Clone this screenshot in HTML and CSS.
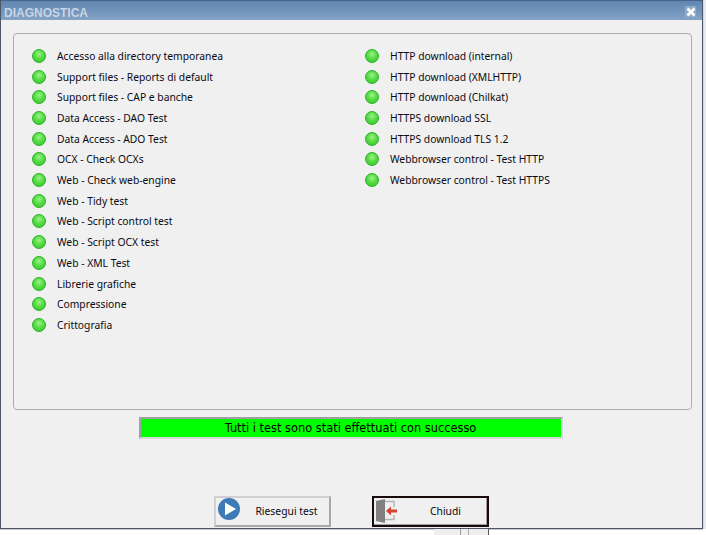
FILE: index.html
```html
<!DOCTYPE html>
<html lang="it">
<head>
<meta charset="utf-8">
<title>Diagnostica</title>
<link rel="stylesheet" href="styles.css">
</head>
<body>
<div class="window">
  <header class="titlebar">
    <span class="title">DIAGNOSTICA</span>
    <span class="close"><svg width="10" height="10" viewBox="0 0 10 10"><path d="M1.5 1.5l7 7M8.5 1.5l-7 7" stroke="#fff" stroke-width="2.6" fill="none"/></svg></span>
  </header>
  <main class="content">
    <section class="panel">
      <ul class="col col-a">
        <li class="row"><i class="led"></i>Accesso alla directory temporanea</li>
        <li class="row"><i class="led"></i>Support files - Reports di default</li>
        <li class="row"><i class="led"></i>Support files - CAP e banche</li>
        <li class="row"><i class="led"></i>Data Access - DAO Test</li>
        <li class="row"><i class="led"></i>Data Access - ADO Test</li>
        <li class="row"><i class="led"></i>OCX - Check OCXs</li>
        <li class="row"><i class="led"></i>Web - Check web-engine</li>
        <li class="row"><i class="led"></i>Web - Tidy test</li>
        <li class="row"><i class="led"></i>Web - Script control test</li>
        <li class="row"><i class="led"></i>Web - Script OCX test</li>
        <li class="row"><i class="led"></i>Web - XML Test</li>
        <li class="row"><i class="led"></i>Librerie grafiche</li>
        <li class="row"><i class="led"></i>Compressione</li>
        <li class="row"><i class="led"></i>Crittografia</li>
      </ul>
      <ul class="col">
        <li class="row"><i class="led"></i>HTTP download (internal)</li>
        <li class="row"><i class="led"></i>HTTP download (XMLHTTP)</li>
        <li class="row"><i class="led"></i>HTTP download (Chilkat)</li>
        <li class="row"><i class="led"></i>HTTPS download SSL</li>
        <li class="row"><i class="led"></i>HTTPS download TLS 1.2</li>
        <li class="row"><i class="led"></i>Webbrowser control - Test HTTP</li>
        <li class="row"><i class="led"></i>Webbrowser control - Test HTTPS</li>
      </ul>
    </section>
    <div class="status">Tutti i test sono stati effettuati con successo</div>
    <footer class="actions">
      <button class="btn" type="button">
        <svg class="btn-icon" width="22" height="22" viewBox="0 0 22 22"><circle cx="11" cy="11" r="11" fill="#3c7ab8"/><path d="M7 4.5L18 11L7 17.5Z" fill="#fff"/></svg>
        <span class="btn-label">Riesegui test</span>
      </button>
      <button class="btn btn-default" type="button">
        <svg class="btn-icon" width="22" height="24" viewBox="0 0 22 24"><path d="M9 2.5H18V8M18 16V20.5H9" fill="none" stroke="#b4b4b4" stroke-width="1.5"/><path d="M0 2L9 0V24L0 22Z" fill="#808080"/><path d="M10 12L15 7.5V10.5H21V13.5H15V16.5Z" fill="#d8432c"/></svg>
        <span class="btn-label">Chiudi</span>
      </button>
    </footer>
  </main>
</div>
<div class="behind">
  <span class="cell cell-a"></span>
  <span class="cell cell-b"></span>
  <span class="cell cell-c"></span>
</div>
</body>
</html>
```
FILE: styles.css
```css
* { box-sizing: border-box; }
html, body { margin: 0; padding: 0; }
body {
  width: 706px;
  height: 535px;
  overflow: hidden;
  background: #fff;
  font-family: "Noto Sans", sans-serif;
  font-size: 10.35px;
  color: #000;
}
.window {
  width: 703px;
  height: 529px;
  display: flex;
  flex-direction: column;
  background: #f0f0f0;
  border-left: 1px solid #4d5666;
  border-right: 1px solid #4d5666;
  border-bottom: 1px solid #4d5666;
  box-shadow: 0 1px 0 #c8c8c8, 1px 0 0 #d8d8e0, 3px 0 0 #e8e8ef;
}
.titlebar {
  height: 20px;
  flex: none;
  display: flex;
  align-items: center;
  justify-content: space-between;
  padding: 4px 6px 0 3px;
  background: linear-gradient(#5f86b1, #84a3c6);
  border-top: 1px solid #45648a;
}
.title {
  font-family: "Liberation Sans", sans-serif;
  font-weight: bold;
  font-size: 12px;
  line-height: 14px;
  color: #c9d5e3;
}
.close {
  width: 11px;
  height: 11px;
  margin-top: -2px;
  display: flex;
  align-items: center;
  justify-content: center;
  background: #8fa9c8;
}
.content {
  flex: 1;
  display: flex;
  flex-direction: column;
  padding: 13px 10px 1px 12px;
  align-items: stretch;
}
.panel {
  height: 377px;
  display: flex;
  padding: 11.6px 0 0 18px;
  border: 1px solid #adadad;
  border-radius: 4px;
}
.col {
  list-style: none;
  margin: 0;
  padding: 0;
  display: flex;
  flex-direction: column;
}
.col-a { width: 333px; }
.row {
  height: 20.7px;
  display: flex;
  align-items: center;
  gap: 11px;
  white-space: nowrap;
  font-size: 10.3px;
  color: #0a0a14;
}
.led {
  width: 14px;
  height: 14px;
  flex: none;
  border-radius: 50%;
  border: 1px solid #28b028;
  background: radial-gradient(circle at 50% 35%, #9cf28a 0, #58dc44 45%, #30c428 100%);
}
.status {
  align-self: center;
  width: 424px;
  height: 22px;
  margin-top: 7px;
  margin-right: 4px;
  display: flex;
  align-items: center;
  justify-content: center;
  background: #00ff00;
  border: 2px solid;
  border-color: #a0a0a0 #d8d8d8 #d8d8d8 #a0a0a0;
  font-family: "DejaVu Sans", sans-serif;
  font-size: 11.4px;
}
.actions {
  margin-top: auto;
  display: flex;
  justify-content: center;
  gap: 41px;
  padding-right: 2px;
}
.btn {
  width: 117px;
  height: 31px;
  display: flex;
  align-items: center;
  padding: 0 0 2px 2px;
  background: #f0f0f0;
  border: 2px solid;
  border-color: #d0d0d4 #a8a8a8 #a8a8a8 #d0d0d4;
  font-family: "Noto Sans", sans-serif;
  font-size: 10.35px;
  color: #0a0a14;
}
.btn-default {
  border: 2px solid #1a0a0a;
  box-shadow: inset -1px -1px 0 #a0a0a0;
}
.btn-label { flex: 1; text-align: center; padding-left: 4px; }
.btn-icon { flex: none; margin-bottom: 3px; }
.btn-default .btn-icon { margin-bottom: 0; }
.btn-default .btn-label { padding-left: 6px; }
.behind {
  display: flex;
  height: 6px;
  padding-left: 434px;
}
.cell { display: block; height: 6px; background: #efefef; border-right: 1px solid #555; }
.cell-a { width: 27px; border-right-color: #999; }
.cell-b { width: 8px; border-right-color: #aaa; }
.cell-c { width: 20px; }
```
